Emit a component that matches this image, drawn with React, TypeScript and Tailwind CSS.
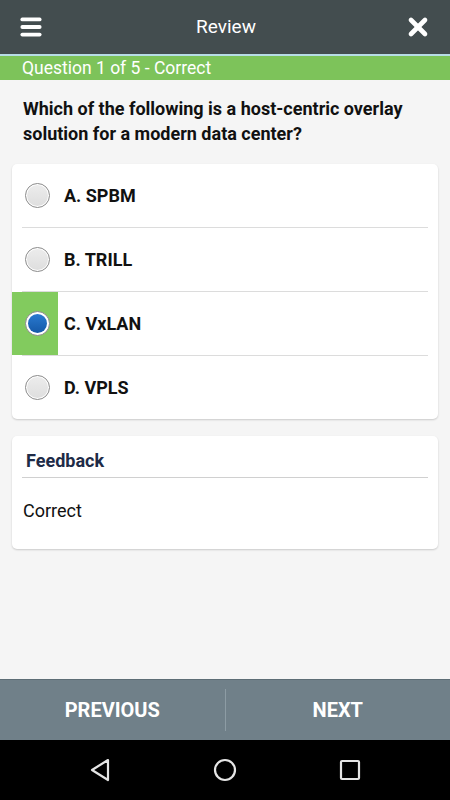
import { Menu, X } from "lucide-react";

const OPTIONS = [
  { id: "A", label: "A. SPBM" },
  { id: "B", label: "B. TRILL" },
  { id: "C", label: "C. VxLAN" },
  { id: "D", label: "D. VPLS" },
];

const SELECTED = "C";

function Radio({ checked }: { checked: boolean }) {
  if (checked) {
    return (
      <div className="w-[25px] h-[25px] rounded-full border border-[#8a8a8a] bg-white flex items-center justify-center">
        <div className="w-[19px] h-[19px] rounded-full bg-gradient-to-b from-[#2a7ad0] to-[#1559a8]" />
      </div>
    );
  }
  return (
    <div className="w-[25px] h-[25px] rounded-full border border-[#8a8a8a] bg-white flex items-center justify-center">
      <div className="w-[21px] h-[21px] rounded-full bg-gradient-to-b from-[#ececec] to-[#dedede]" />
    </div>
  );
}

export default function App() {
  return (
    <div className="w-[450px] h-[800px] flex flex-col bg-[#f5f5f5] font-['Roboto',sans-serif] overflow-hidden">
      {/* Header */}
      <div className="h-[54px] bg-[#434d4f] flex items-center justify-between px-[18px] shrink-0">
        <Menu size={26} strokeWidth={3.5} className="text-white" />
        <div className="text-white text-[19px] pl-1">Review</div>
        <X size={28} strokeWidth={4} className="text-white" />
      </div>
      <div className="h-[2px] bg-[#b7dde6] shrink-0" />
      <div className="h-[24px] bg-[#7dc35a] text-white text-[17.5px] leading-[24px] pl-[22px] shrink-0">
        Question 1 of 5 - Correct
      </div>

      {/* Question */}
      <div className="px-[23px] pt-[16px] text-[18px] font-bold text-[#111] leading-[25px]">
        Which of the following is a host-centric overlay solution for a modern data center?
      </div>

      {/* Options */}
      <div className="mx-[12px] mt-[18px] bg-white rounded-[5px] shadow-[0_1px_2px_rgba(0,0,0,0.18)] overflow-hidden">
        {OPTIONS.map((o, i) => {
          const sel = o.id === SELECTED;
          return (
            <div key={o.id}>
              {i > 0 && <div className="mx-[10px] h-px bg-[#dcdcdc]" />}
              <div className="h-[63px] flex items-center">
                <div className={sel ? "w-[46px] h-full bg-[#82cb5e] flex items-center justify-center pl-[4px]" : "w-[46px] h-full flex items-center justify-center pl-[4px]"}>
                  <Radio checked={sel} />
                </div>
                <div className="pl-[6px] pb-[1px] text-[18px] font-bold text-[#111]">{o.label}</div>
              </div>
            </div>
          );
        })}
      </div>

      {/* Feedback */}
      <div className="mx-[12px] mt-[17px] bg-white rounded-[5px] shadow-[0_1px_2px_rgba(0,0,0,0.18)] pb-[25px]">
        <div className="px-[14px] pt-[11px] pb-[3px] text-[18px] font-bold text-[#1e2b47]">Feedback</div>
        <div className="mx-[10px] h-px bg-[#d0d0d0]" />
        <div className="px-[11px] pt-[19px] text-[18px] text-[#111]">Correct</div>
      </div>

      <div className="flex-1" />

      {/* Prev / Next */}
      <div className="h-[61px] bg-[#708089] flex items-center shrink-0 border-t border-[#5d6d75]">
        <div className="flex-1 text-center text-white font-bold text-[20px]">PREVIOUS</div>
        <div className="w-px h-[42px] bg-[#8d9ca4]" />
        <div className="flex-1 text-center text-white font-bold text-[20px]">NEXT</div>
      </div>

      {/* Android nav */}
      <div className="h-[60px] bg-black flex items-center justify-center shrink-0">
        <div className="w-[125px] flex justify-center">
          <svg width="22" height="24" viewBox="0 0 22 24">
            <path d="M19 2 L3 12 L19 22 Z" fill="none" stroke="#e5e5e5" strokeWidth="2.2" strokeLinejoin="round" />
          </svg>
        </div>
        <div className="w-[125px] flex justify-center">
          <svg width="24" height="24" viewBox="0 0 24 24">
            <circle cx="12" cy="12" r="10" fill="none" stroke="#e5e5e5" strokeWidth="2.2" />
          </svg>
        </div>
        <div className="w-[125px] flex justify-center">
          <svg width="22" height="22" viewBox="0 0 22 22">
            <rect x="2" y="2" width="18" height="18" rx="1" fill="none" stroke="#e5e5e5" strokeWidth="2.2" />
          </svg>
        </div>
      </div>
    </div>
  );
}
